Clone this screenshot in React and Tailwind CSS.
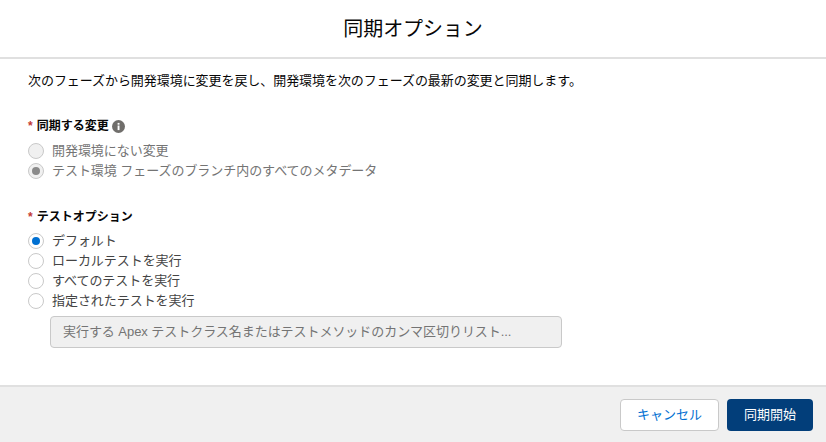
import React from 'react';

const font = { fontFamily: '"Liberation Sans", "Noto Sans CJK JP", sans-serif' };

function Radio({ label, checked, disabled }) {
  const dot = disabled ? 'bg-[#8a8a8a]' : 'bg-[#0070d2]';
  return (
    <div className="flex items-center h-[20px]">
      <span className={`w-[16px] h-[16px] rounded-full border border-[#c9c9c9] flex items-center justify-center shrink-0 ${disabled ? 'bg-[#f0f0f0]' : 'bg-white'}`}>
        {checked && <span className={`w-[8px] h-[8px] rounded-full ${dot}`} />}
      </span>
      <span className={`ml-[8px] text-[13px] leading-[20px] tracking-[-0.05px] ${disabled ? 'text-[#747474]' : 'text-[#444444]'}`}>{label}</span>
    </div>
  );
}

function Label({ children }) {
  return (
    <div className="flex items-center h-[18px] text-[12px] font-bold text-[#080707]">
      <span className="text-[#c23934] mr-[4px] font-bold">*</span>
      {children}
    </div>
  );
}

export default function App() {
  return (
    <div className="w-[826px] h-[442px] bg-white flex flex-col overflow-hidden" style={font}>
      <div className="h-[59px] shrink-0 border-b-2 border-[#e0e0e0] flex items-center justify-center">
        <h1 className="text-[20px] text-[#080707] leading-[24px] tracking-[-0.1px]">同期オプション</h1>
      </div>

      <div className="flex-1 pl-[28px] pt-[13px]">
        <p className="text-[13px] leading-[18px] text-[#080707] tracking-[-0.06px]">次のフェーズから開発環境に変更を戻し、開発環境を次のフェーズの最新の変更と同期します。</p>

        <div className="mt-[27px]">
          <Label>
            同期する変更
            <svg className="ml-[3px]" width="13" height="13" viewBox="0 0 13 13">
              <circle cx="6.5" cy="6.5" r="6.5" fill="#706e6b" />
              <rect x="5.6" y="5.5" width="1.9" height="4.6" fill="#fff" />
              <rect x="5.6" y="2.9" width="1.9" height="1.8" fill="#fff" />
            </svg>
          </Label>
          <div className="mt-[6px]">
            <Radio label="開発環境にない変更" disabled />
            <Radio label="テスト環境 フェーズのブランチ内のすべてのメタデータ" checked disabled />
          </div>
        </div>

        <div className="mt-[27px]">
          <Label>テストオプション</Label>
          <div className="mt-[5px]">
            <Radio label="デフォルト" checked />
            <Radio label="ローカルテストを実行" />
            <Radio label="すべてのテストを実行" />
            <Radio label="指定されたテストを実行" />
          </div>
          <div className="ml-[22px] mt-[5px] w-[512px] h-[32px] rounded-[4px] border border-[#c9c9c9] bg-[#f0f0f0] flex items-center pl-[12px] text-[13px] text-[#747474] tracking-[-0.05px]">
            実行する Apex テストクラス名またはテストメソッドのカンマ区切りリスト...
          </div>
        </div>
      </div>

      <div className="h-[57px] shrink-0 border-t-2 border-[#e0e0e0] bg-[#f0f0f0] flex items-center justify-end gap-[8px] pr-[13px]">
        <button className="w-[99px] h-[32px] rounded-[4px] border border-[#c9c9c9] bg-white text-[13px] text-[#0070d2]">キャンセル</button>
        <button className="w-[86px] h-[32px] rounded-[4px] bg-[#023e7a] text-[13px] text-white">同期開始</button>
      </div>
    </div>
  );
}
